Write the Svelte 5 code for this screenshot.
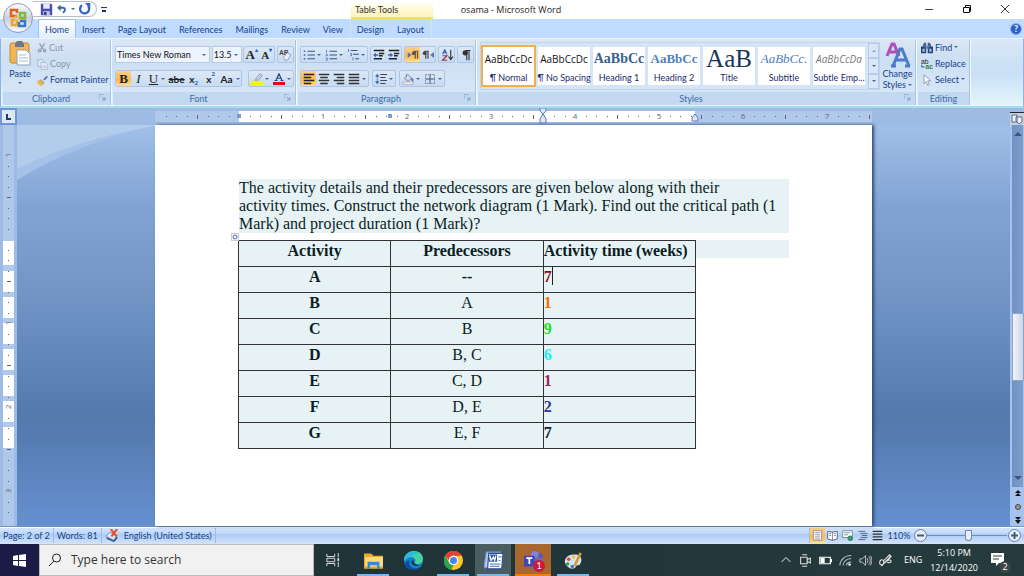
<script>
    const icons = {
        save: '<path d="M1 1h13l1 1v13H1z" fill="#4a50b0"/><path d="M4 1h8v6H4z" fill="#e8ecfa"/><path d="M4 10h8v5H4z" fill="#c5cae8"/><path d="M5 11h3v4H5z" fill="#343a90"/>',
        undo: '<path d="M4 6h5c5 0 5 6 0 8" fill="none" stroke="#3764b8" stroke-width="3"/><path d="M0 6l6-5v10z" fill="#3764b8"/>',
        redo: '<path d="M4 3a6 6 0 1 0 8 1" fill="none" stroke="#3764c4" stroke-width="3"/><path d="M8 0h7v8z" fill="#3764c4"/>',
        cut: '<path d="M4 1l6 9M12 1L6 10" stroke="#8b9bb2" stroke-width="2"/><circle cx="4" cy="12" r="2" fill="none" stroke="#8b9bb2" stroke-width="2"/><circle cx="12" cy="12" r="2" fill="none" stroke="#8b9bb2" stroke-width="2"/>',
        copy: '<path d="M1 1h7l2 3v7H1z" fill="#dce7f4" stroke="#9aabc2"/><path d="M6 5h6l3 3v7H6z" fill="#e8eff8" stroke="#9aabc2"/><path d="M8 10h5M8 12h5" stroke="#9aabc2"/>',
        painter: '<path d="M9 6l5-5 2 2-5 5z" fill="#5572a8"/><path d="M5 6l6 5-2 3-7-5z" fill="#8f9aa8"/><path d="M0 9l4-2 6 5-3 4c-3 0-6-3-7-7z" fill="#e9b64a"/>',
        clear: '<text x="0" y="8" font-size="9" font-weight="bold" fill="#444" font-family="Liberation Sans">AB</text><path d="M6 11l5-6 5 3-5 7H8z" fill="#eceff8" stroke="#7d86a8"/>',
        bullets: '<path d="M6 3h10M6 8h10M6 13h10" stroke="#3d4f77" stroke-width="1.3"/><path d="M1 2h2v2H1zM1 7h2v2H1zM1 12h2v2H1z" fill="#3d65b5"/>',
        numbers: '<path d="M6 3h10M6 8h10M6 13h10" stroke="#3d4f77" stroke-width="1.3"/><path d="M2 1v4M1 7h2v2H1M1 12h2v3H1" fill="none" stroke="#3d65b5"/>',
        levels: '<path d="M5 2h9M8 7h8M11 13h5" stroke="#3d4f77" stroke-width="1.3"/><path d="M2 0v4M4 6h2v3H4M8 11v4" fill="none" stroke="#3d65b5"/>',
        outdent: '<path d="M1 2h14M8 6h7M8 9h5M1 13h11" stroke="#222" stroke-width="2"/><path d="M0 8l4-3v2h3v2H4v2z" fill="#3d65b5"/>',
        indent: '<path d="M1 2h14M8 6h7M8 9h5M1 13h11" stroke="#222" stroke-width="2"/><path d="M7 8L3 5v2H0v2h3v2z" fill="#3d65b5"/>',
        ltr: '<path d="M1 4l5 4-5 4z" fill="#4a78c8"/><path d="M15 3H9M11 3v10M14 3v10" stroke="#555" stroke-width="1.6"/><circle cx="9" cy="5.500" r="2.500" fill="#555"/>',
        rtl: '<path d="M16 4l-5 4 5 4z" fill="#4a78c8"/><path d="M9 3H3M5 3v10M8 3v10" stroke="#444" stroke-width="1.6"/><circle cx="3.500" cy="5.500" r="2.500" fill="#444"/>',
        sort: '<path d="M2 7l3-6 3 6M3 5h4" fill="none" stroke="#3d65b5" stroke-width="1.5"/><path d="M2 9h6l-6 6h6" fill="none" stroke="#a33040" stroke-width="1.5"/><path d="M13 1v12M10 10l3 4 3-4" fill="none" stroke="#333" stroke-width="1.5"/>',
        pilcrow: '<path d="M14 2H7M9 2v13M12 2v13" stroke="#333" stroke-width="1.5"/><circle cx="7" cy="5" r="3.500" fill="#333"/>',
        left: '<path d="M1 2h14M1 6h10M1 10h14M1 14h10" stroke="#222" stroke-width="1.7"/>',
        center: '<path d="M1 2h14M3 6h10M1 10h14M3 14h10" stroke="#333" stroke-width="1.7"/>',
        right: '<path d="M1 2h14M5 6h10M1 10h14M5 14h10" stroke="#333" stroke-width="1.7"/>',
        justify: '<path d="M1 2h14M1 6h14M1 10h14M1 14h14" stroke="#333" stroke-width="1.7"/>',
        spacing: '<path d="M7 2h9M7 6h7M7 10h9M7 14h7" stroke="#445" stroke-width="1.4"/><path d="M3 3v10" stroke="#3d65b5"/><path d="M0 5l3-4 3 4zM0 11l3 4 3-4z" fill="#3d65b5"/>',
        shading: '<path d="M3 7l5-5 5 5-5 4z" fill="#d3dbe8" stroke="#66758f"/><path d="M6 5V1" stroke="#66758f"/><path d="M12 6l3 2v3h-2z" fill="#3d65b5"/><path d="M1 12h14v3H1z" fill="#fff" stroke="#99a"/>',
        borders: '<path d="M2 2h12v12H2z" fill="none" stroke="#5c6c88" stroke-dasharray="2 1"/><path d="M8 2v12M2 8h12" stroke="#46536c" stroke-width="1.3"/>',
        marker: '<path d="M6 8l6-7 3 2-5 7z" fill="#c3d5ee" stroke="#7f91ab"/><path d="M3 10l3-2 3 2-2 1z" fill="#dfb24e"/><path d="M0 12h16v4H0z" fill="#fff200"/>',
        fontcolor: '<path d="M4 10l4-9 4 9M5 7h6M2 10h4M10 10h4" fill="none" stroke="#2b4480" stroke-width="1.6"/><path d="M0 12h16v4H0z" fill="#f00018"/>',
        find: '<path d="M2 6l2-5h3v5M9 6V1h3l2 5" fill="#42618f"/><path d="M0 6h7v9H0zM9 6h7v9H9z" fill="#24457c"/><path d="M6 5h4v4H6z" fill="#6a86b8"/><path d="M2 9h3v4H2zM11 9h3v4h-3z" fill="#a9c0e4"/>',
        replace: '<text x="0" y="8" font-size="9" fill="#222" font-family="Liberation Sans">ab</text><text x="6" y="15" font-size="9" font-weight="bold" fill="#2c8642" font-family="Liberation Sans">ac</text><path d="M1 9v3h4" fill="none" stroke="#36a" stroke-width="1.5"/>',
        select: '<path d="M4 1v12l3-3 2 5 2-1-2-5h4z" fill="#fff" stroke="#7b8ba8"/>',
        proof: '<path d="M1 9l5-5 9 4-4 6z" fill="#dbe6f8" stroke="#6c80ac"/><path d="M2 11l9 4 4-5" fill="none" stroke="#35589c" stroke-width="2"/><path d="M7 0l7 9M15 0L8 9" stroke="#f04a28" stroke-width="2.500"/>',
        print: '<path d="M2 1h12v14H2z" fill="#fff" stroke="#6b7690"/><path d="M4 4h8M4 7h8M4 10h8M4 13h8" stroke="#667"/>',
        reading: '<path d="M8 3L1 2v11l7 2 7-2V2z" fill="#fff" stroke="#566480" stroke-width="1.4"/><path d="M8 3v12M3 5h3M3 8h3M10 5h3M10 8h3" stroke="#566480"/>',
        web: '<path d="M1 1h14v10H1z" fill="#fff" stroke="#566480"/><path d="M3 4h9M3 7h6" stroke="#566480"/><circle cx="12" cy="12" r="4" fill="#2f9558"/><path d="M10 10h3v3z" fill="#4c8be0"/>',
        outline: '<path d="M2 2h10M5 5h10M7 8h8M5 11h10M2 14h10" stroke="#566480" stroke-width="1.4"/>',
        taskview: '<path d="M1 1v3h9V1M1 15v-3h9v3M1 6h9v4H1zM14 0v5M14 10v6" fill="none" stroke="#eee"/><path d="M13 6h2v3h-2z" fill="#eee"/>',
        explorer: '<path d="M0 2h6l2 2h8v11H0z" fill="#e8a92c"/><path d="M1 5h15v8H1z" fill="#ffdc78"/><path d="M3 9h10v6h-2v-3H5v3H3z" fill="#2d8cd2"/>',
        edge: '<circle cx="8" cy="8" r="8" fill="#1683cf"/><path d="M0 8C0-2 16-3 16 7c0 4-5 5-7 3 3-5-5-7-9-2z" fill="#42d3a0"/><path d="M0 8c1-8 10-9 14-5C9 1 7 4 0 8z" fill="#2db9e8"/><path d="M5 8c-2 5 3 9 9 5-3 4-9 4-12 1-2-3-1-6 3-6z" fill="#0d4e9a"/><path d="M8 7c-1 3 2 5 5 5-5 2-9-2-5-5z" fill="#203137"/>',
        chrome: '<circle cx="8" cy="8" r="8" fill="#fbc926"/><path d="M1 4a8 8 0 0 1 14 0H8L5 9z" fill="#e34133"/><path d="M1 4l4 7 3 1-2 4A8 8 0 0 1 1 4z" fill="#2ba24c"/><circle cx="8" cy="8" r="4" fill="#fff"/><circle cx="8" cy="8" r="3" fill="#4285f4"/>',
        word: '<path d="M2 1h12l-2 13H0z" fill="#b9cdea" stroke="#7d99c8"/><path d="M4 2h12l-1 13H3z" fill="#fff" stroke="#2a4f9b"/><path d="M12 5h3M12 8h2M5 11h9M5 13h8" stroke="#6b8fcc"/><path d="M5 3h6v6H4z" fill="#285aa8"/><path d="M5 4l1 4 2-3 1 3 1-4" fill="none" stroke="#fff"/>',
        teams: '<circle cx="9" cy="3" r="3" fill="#7b83eb"/><circle cx="14" cy="4" r="2" fill="#5059c9"/><path d="M6 6h10v5a5 5 0 0 1-10 2z" fill="#6068cc"/><path d="M0 4h9v9H0z" fill="#4148ae"/><path d="M2 6h5M4.500 6v5" stroke="#fff" stroke-width="1.500"/>',
        paint: '<path d="M8 3c5-1 8 3 6 7-1 3-3 1-4 3s-4 3-7 0C-2 9 2 3 8 3z" fill="#d3e5ef"/><circle cx="4" cy="7" r="1.500" fill="#e74335"/><circle cx="8" cy="5" r="1.500" fill="#f7c331"/><circle cx="3" cy="11" r="1.500" fill="#3ba055"/><circle cx="7" cy="13" r="1.500" fill="#3f78ce"/><path d="M8 12l5-11 2 1-5 11z" fill="#d99638"/>',
        chevron: '<path d="M1 11l7-7 7 7" fill="none" stroke="#fff" stroke-width="1.500"/>',
        meet: '<path d="M2 4h8v8H2zM10 7l4-2v6l-4-2M4 1h6M4 15h6" fill="none" stroke="#ddd" stroke-width="1.300"/>',
        battery: '<path d="M1 4h13v8H1z" fill="none" stroke="#fff" stroke-width="1.500"/><path d="M2 5h5v6H2zM14 6h2v4h-2z" fill="#fff"/>',
        wifi: '<path d="M1 14A13 13 0 0 1 15 2M5 14a9 9 0 0 1 10-8M9 14a5 5 0 0 1 6-4" fill="none" stroke="#bbc4c5" stroke-width="1.300"/><circle cx="13" cy="13" r="1.500" fill="#fff"/>',
        volume: '<path d="M1 6h3l4-4v12l-4-4H1zM10 5q2 3 0 6M12 3q4 5 0 10M14 2q4 6 0 12" fill="none" stroke="#ddd"/>',
        pen: '<path d="M1 10c0-4 5-4 5 0s-6 5-5 0M6 8l7-7 2 2-8 8c4-5 8-4 8-2s-4 2-5 1M3 15L14 3" fill="none" stroke="#e3e6e6" stroke-width="1.300"/>'
    };

    const tabs = ["Home", "Insert", "Page Layout", "References", "Mailings", "Review", "View"];

    const styleItems = [
        { sample: "AaBbCcDc", name: "¶ Normal", kind: "body" },
        { sample: "AaBbCcDc", name: "¶ No Spacing", kind: "body" },
        { sample: "AaBbCc", name: "Heading 1", kind: "h1" },
        { sample: "AaBbCc", name: "Heading 2", kind: "h2" },
        { sample: "AaB", name: "Title", kind: "title" },
        { sample: "AaBbCc.", name: "Subtitle", kind: "subtitle" },
        { sample: "AaBbCcDa", name: "Subtle Emp...", kind: "subtle" }
    ];

    const rows = [
        { activity: "A", before: "--", weeks: 7, color: "#8f0a14" },
        { activity: "B", before: "A", weeks: 1, color: "#ff6a00" },
        { activity: "C", before: "B", weeks: 9, color: "#1fe01f" },
        { activity: "D", before: "B, C", weeks: 6, color: "#18f0f0" },
        { activity: "E", before: "C, D", weeks: 1, color: "#a02060" },
        { activity: "F", before: "D, E", weeks: 2, color: "#3030a0" },
        { activity: "G", before: "E, F", weeks: 7, color: "#102028" }
    ];

    // One inch on the rulers, in pixels, and where the text area starts
    const inch = 84;
    const origin = 84;
    const eighths = (from, to) => Array.from({ length: to - from + 1 }, (_, i) => from + i);

    const pinned = [
        { name: "File Explorer", icon: "explorer", open: true },
        { name: "Microsoft Edge", icon: "edge" },
        { name: "Google Chrome", icon: "chrome", open: true },
        { name: "Word", icon: "word", open: true, state: "active" },
        { name: "Teams", icon: "teams", open: true, state: "alert", badge: 1 },
        { name: "Paint", icon: "paint", open: true }
    ];

    const tray = ["chevron", "meet", "battery", "wifi", "volume", "pen"];
</script>

{#snippet icon(name, size = 12)}
    <svg class="icon" width={size} height={size} viewBox="0 0 16 16" aria-hidden="true">{@html icons[name]}</svg>
{/snippet}

{#snippet tool(label, name, caret = false, on = false)}
    <button class="tool" class:on class:wide={caret} aria-label={label}>
        {@render icon(name)}
        {#if caret}<i class="caret"></i>{/if}
    </button>
{/snippet}

{#snippet launcher()}
    <svg class="launcher" width="7" height="7" viewBox="0 0 7 7" aria-hidden="true">
        <path d="M0 5V0h5M3 3l3 3M6 3v3H3" fill="none" stroke="#7f9fc9" />
    </svg>
{/snippet}

<div class="app">
    <header>
        <div class="titlebar">
            <div class="quick">
                <button aria-label="Save">{@render icon("save", 13)}</button>
                <button aria-label="Undo">{@render icon("undo", 10)}</button>
                <i class="caret"></i>
                <button aria-label="Redo">{@render icon("redo", 12)}</button>
            </div>
            <button class="more" aria-label="Customize toolbar"><i class="caret"></i></button>
            <div class="context">Table Tools</div>
            <h1>osama - Microsoft Word</h1>
            <div class="window">
                <button aria-label="Minimize"><svg width="10" height="10"><path d="M1 5.500h8" stroke="#444" /></svg></button>
                <button aria-label="Restore"><svg width="10" height="10"><path d="M1.500 3.500h6v5h-6zM3.500 3V1.500h5v6H8" fill="none" stroke="#111" /></svg></button>
                <button aria-label="Close"><svg width="10" height="10"><path d="M1 1l8 8M9 1L1 9" stroke="#333" /></svg></button>
            </div>
        </div>
        <button class="office" aria-label="Office Button">
            <svg width="18" height="20" viewBox="0 0 18 20" fill="none" stroke-width="2.500">
                <path d="M8 8H2V2h6v3" stroke="#e2601c" />
                <path d="M11 5h5v5h-5z" stroke="#84b53c" />
                <path d="M8 12v5H3v-5h3" stroke="#f0a51e" />
                <path d="M11 13h5v5h-6v-4" stroke="#3c78c8" />
                <path d="M6 8h4v4H6z" stroke="#f3c34b" stroke-width="1" />
            </svg>
        </button>
        <nav class="tabs">
            {#each tabs as tab, i}
                <button class:current={i === 0}>{tab}</button>
            {/each}
            <span class="tool-tabs">
                <button>Design</button>
                <button>Layout</button>
            </span>
            <button class="help" aria-label="Help">
                <svg width="12" height="12" viewBox="0 0 12 12"><circle cx="6" cy="6" r="5.500" fill="#2b62c8" stroke="#8fb2e8" /><text x="6" y="9" text-anchor="middle" font-size="9" font-weight="bold" fill="#fff">?</text></svg>
            </button>
        </nav>

        <div class="ribbon">
            <section class="group clipboard">
                <div class="content">
                    <button class="paste">
                        <svg width="23" height="25" viewBox="0 0 23 25" aria-hidden="true">
                            <rect x="1" y="2" width="19" height="20" rx="2" fill="#eeb656" stroke="#c28a34" />
                            <path d="M6 3l2-3h5l2 3v3H6z" fill="#6e7788" />
                            <path d="M8 9h9l4 4v11H8z" fill="#fff" stroke="#8ea0bd" />
                            <path d="M10 14h7M10 17h9M10 20h9" stroke="#a9b9d2" />
                        </svg>
                        Paste
                        <i class="caret"></i>
                    </button>
                    <div class="stack">
                        <button class="dim">{@render icon("cut", 10)}Cut</button>
                        <button class="dim">{@render icon("copy", 11)}Copy</button>
                        <button>{@render icon("painter", 11)}Format Painter</button>
                    </div>
                </div>
                <footer><span>Clipboard</span>{@render launcher()}</footer>
            </section>

            <section class="group font">
                <div class="content lines">
                    <div class="line">
                        <label class="combo family">
                            <select aria-label="Font"><option>Times New Roman</option></select>
                            <i class="caret"></i>
                        </label>
                        <label class="combo size">
                            <select aria-label="Font size"><option>13.5</option></select>
                            <i class="caret"></i>
                        </label>
                        <div class="cluster">
                            <button class="tool letter grow">A<sup>▴</sup></button>
                            <button class="tool letter shrink">A<sup>▾</sup></button>
                        </div>
                        <div class="cluster">{@render tool("Clear formatting", "clear")}</div>
                    </div>
                    <div class="line">
                        <div class="cluster">
                            <button class="tool letter on"><b>B</b></button>
                            <button class="tool letter"><em>I</em></button>
                            <button class="tool letter wide"><u>U</u><i class="caret"></i></button>
                            <button class="tool letter small"><s>abe</s></button>
                            <button class="tool letter small">x<sub>2</sub></button>
                            <button class="tool letter small">x<sup>2</sup></button>
                            <button class="tool letter small wide">Aa<i class="caret"></i></button>
                        </div>
                        <div class="cluster">
                            {@render tool("Highlight", "marker", true)}
                            {@render tool("Font color", "fontcolor", true)}
                        </div>
                    </div>
                </div>
                <footer><span>Font</span>{@render launcher()}</footer>
            </section>

            <section class="group paragraph">
                <div class="content lines">
                    <div class="line">
                        <div class="cluster">
                            {@render tool("Bullets", "bullets", true)}
                            {@render tool("Numbering", "numbers", true)}
                            {@render tool("Multilevel list", "levels", true)}
                        </div>
                        <div class="cluster">
                            {@render tool("Decrease indent", "outdent")}
                            {@render tool("Increase indent", "indent")}
                        </div>
                        <div class="cluster">
                            {@render tool("Left to right", "ltr", false, true)}
                            {@render tool("Right to left", "rtl")}
                        </div>
                        <div class="cluster">{@render tool("Sort", "sort")}</div>
                        <div class="cluster">{@render tool("Show marks", "pilcrow")}</div>
                    </div>
                    <div class="line packed">
                        <div class="cluster">
                            {@render tool("Align left", "left", false, true)}
                            {@render tool("Center", "center")}
                            {@render tool("Align right", "right")}
                            {@render tool("Justify", "justify", true)}
                        </div>
                        <div class="cluster">{@render tool("Line spacing", "spacing", true)}</div>
                        <div class="cluster">
                            {@render tool("Shading", "shading", true)}
                            {@render tool("Borders", "borders", true)}
                        </div>
                    </div>
                </div>
                <footer><span>Paragraph</span>{@render launcher()}</footer>
            </section>

            <section class="group styles">
                <div class="content">
                    <div class="gallery">
                        {#each styleItems as item, i}
                            <button class="style-item" class:picked={i === 0}>
                                <span class="sample {item.kind}">{item.sample}</span>
                                <span class="name">{item.name}</span>
                            </button>
                        {/each}
                        <div class="pager">
                            <button aria-label="Previous styles"><i class="caret up"></i></button>
                            <button aria-label="Next styles"><i class="caret"></i></button>
                            <button aria-label="All styles"><i class="caret"></i></button>
                        </div>
                    </div>
                    <button class="change">
                        <svg width="26" height="26" viewBox="0 0 26 26" aria-hidden="true" fill="none">
                            <path d="M2 14L7 2h2l5 12M4 10h8" stroke="#b04fb8" stroke-width="3" />
                            <path d="M8 24l7-17h2l7 17M10 18h12M6 24h5M20 24h5" stroke="#4a7cc8" stroke-width="3" />
                        </svg>
                        <span>Change</span>
                        <span>Styles <i class="caret"></i></span>
                    </button>
                </div>
                <footer><span>Styles</span>{@render launcher()}</footer>
            </section>

            <section class="group editing">
                <div class="content">
                    <div class="stack">
                        <button>{@render icon("find")}Find <i class="caret"></i></button>
                        <button>{@render icon("replace")}Replace</button>
                        <button>{@render icon("select")}Select <i class="caret"></i></button>
                    </div>
                </div>
                <footer><span>Editing</span></footer>
            </section>
        </div>
    </header>

    <div class="ruler-row">
        <button class="corner" aria-label="Tab stop"><svg width="11" height="11"><path d="M4 3v5h4" fill="none" stroke="#223a66" stroke-width="2" /></svg></button>
        <div class="ruler">
            <svg width="717" height="17" aria-hidden="true">
                <rect x="0" y="3" width="717" height="11" fill="#b0c9eb" />
                <rect x={origin} y="3" width="456" height="11" fill="#fff" />
                {#each eighths(-7, 60) as n}
                    {@const x = origin + (n * inch) / 8}
                    {#if n % 8 === 0 && n > 0}
                        <text {x} y="11" text-anchor="middle">{n / 8}</text>
                    {:else if n % 8 !== 0}
                        <rect x={Math.round(x)} y={n % 4 === 0 ? 7 : 8} width="1" height={n % 4 === 0 ? 4 : 1} fill="#5a6578" />
                    {/if}
                {/each}
                <path d="M82 6h4v4h-4zM233 6h4v4h-4z" fill="#7b9ccd" />
                <path d="M385 0h6v3l-3 3-3-3zM388 6l3 5v4h-6v-4zM540 6l3 4v3h-6v-3z" fill="#dbe7f8" stroke="#5c7fb5" />
            </svg>
        </div>
        <button class="view-ruler" aria-label="View ruler"><svg width="12" height="12"><path d="M1 2h5v7H1zM5 4h6v5l-3 2-3-3z" fill="#eef2fa" stroke="#5c6884" /></svg></button>
    </div>

    <div class="workspace">
        <div class="side-ruler">
            <svg width="17" height="401" aria-hidden="true">
                <rect x="3" y="0" width="11" height="401" fill="#b0c9eb" />
                <rect x="3" y="116" width="11" height="24" fill="#fff" />
                {#each eighths(0, 6) as n}
                    <rect x="3" y={146 + n * 26} width="11" height="21" fill="#fff" />
                {/each}
                {#each eighths(-8, 26) as n}
                    {@const y = Math.round(114 + (n * inch) / 8)}
                    {#if n % 8 === 0 && n !== 0}
                        <text x="0" y="0" text-anchor="middle" transform="translate(11 {y}) rotate(-90)">{Math.abs(n / 8)}</text>
                    {:else if n !== 0}
                        <rect x={n % 4 === 0 ? 7 : 8} {y} width={n % 4 === 0 ? 4 : 1} height="1" fill="#5a6578" />
                    {/if}
                {/each}
            </svg>
        </div>

        <main>
            <svg class="swoosh" width="138" height="56" aria-hidden="true">
                <path d="M0 0h138v1Q60 18 0 55z" fill="#a5c1e8" />
                <path d="M0 0h138v1Q60 14 0 44z" fill="#b2cceb" />
            </svg>
            <article class="page">
                <p>
                    The activity details and their predecessors are given below along with their<br />
                    activity times. Construct the network diagram (1 Mark). Find out the critical path (1<br />
                    Mark) and project duration (1 Mark)?
                </p>
                <div class="table-line">
                    <span class="handle"><svg width="6" height="6"><circle cx="3" cy="3" r="2" fill="none" stroke="#3d65c5" /></svg></span>
                    <table>
                        <thead>
                            <tr><th>Activity</th><th>Predecessors</th><th>Activity time (weeks)</th></tr>
                        </thead>
                        <tbody>
                            {#each rows as row, i}
                                <tr>
                                    <th scope="row">{row.activity}</th>
                                    <td class:dashes={i === 0}>{row.before}</td>
                                    <td class="weeks" class:cursor={i === 0} style="color: {row.color}">{row.weeks}</td>
                                </tr>
                            {/each}
                        </tbody>
                    </table>
                    <div class="tail"></div>
                </div>
            </article>
        </main>

        <div class="scrollbar">
            <div class="track">
                <i class="arrow up"></i>
                <div class="thumb"></div>
                <i class="arrow"></i>
            </div>
            <div class="browse">
                <button aria-label="Previous page"><svg width="6" height="8"><path d="M3 0l3 3H0zM3 3l3 3H0z" fill="#111" /></svg></button>
                <button aria-label="Select browse object"><svg width="6" height="6"><circle cx="3" cy="3" r="2.500" fill="#999" stroke="#444" /></svg></button>
                <button aria-label="Next page"><svg width="6" height="8"><path d="M3 4L0 1h6zM3 8L0 4h6z" fill="#111" /></svg></button>
            </div>
        </div>
    </div>

    <div class="status">
        <span>Page: 2 of 2</span>
        <span>Words: 81</span>
        <span class="lang">{@render icon("proof", 13)}English (United States)</span>
        <div class="views">
            <button class="on" aria-label="Print layout">{@render icon("print", 11)}</button>
            <button aria-label="Full screen reading">{@render icon("reading", 11)}</button>
            <button aria-label="Web layout">{@render icon("web", 11)}</button>
            <button aria-label="Outline">{@render icon("outline", 11)}</button>
            <button aria-label="Draft">{@render icon("justify", 11)}</button>
        </div>
        <button class="percent">110%</button>
        <button class="round" aria-label="Zoom out"><svg width="13" height="13"><circle cx="6.500" cy="6.500" r="6" fill="#e6effb" stroke="#6180b0" /><path d="M3 6.500h7" stroke="#42597f" stroke-width="2" /></svg></button>
        <input type="range" aria-label="Zoom" min="10" max="190" value="103" />
        <button class="round" aria-label="Zoom in"><svg width="13" height="13"><circle cx="6.500" cy="6.500" r="6" fill="#e6effb" stroke="#6180b0" /><path d="M3 6.500h7M6.500 3v7" stroke="#42597f" stroke-width="2" /></svg></button>
    </div>

    <div class="taskbar">
        <button class="start" aria-label="Start"><svg width="13" height="13"><path d="M0 2l5-1v5H0zM6 1l7-1v6H6zM0 7h5v5l-5-1zM6 7h7v6l-7-1z" fill="#fff" /></svg></button>
        <label class="search">
            <svg width="14" height="14" aria-hidden="true"><circle cx="8.500" cy="5" r="4" fill="none" stroke="#222" /><path d="M6 8l-5 5" stroke="#222" /></svg>
            <input type="text" aria-label="Search" placeholder="Type here to search" />
        </label>
        <button class="app-button" aria-label="Task view">{@render icon("taskview", 14)}</button>
        {#each pinned as app}
            <button class="app-button {app.state}" class:open={app.open} aria-label={app.name}>
                {@render icon(app.icon, 19)}
                {#if app.badge}<span class="badge">{app.badge}</span>{/if}
            </button>
        {/each}
        <div class="tray">
            {#each tray as name}
                <button aria-label={name}>{@render icon(name, name === "chevron" ? 10 : 13)}</button>
            {/each}
            <span class="input-lang">ENG</span>
            <span class="clock"><time>5:10 PM</time><time>12/14/2020</time></span>
            <button class="notes" aria-label="Notifications">
                <svg width="14" height="14"><path d="M0 0h13v10H8l-3 3v-3H0z" fill="#fff" /><path d="M2 3h9M2 6h6" stroke="#263b40" /></svg>
                <span class="badge">2</span>
            </button>
        </div>
    </div>
</div>

<style>
    :global(body) {
        margin: 0;
    }

    .app {
        display: flex;
        flex-direction: column;
        min-height: 100vh;
        background: #fff;
        color: #15428b;
        font: 9px/12px Lato, "Open Sans", sans-serif;
    }

    .app :global(*) {
        box-sizing: border-box;
    }

    button {
        display: flex;
        align-items: center;
        justify-content: center;
        padding: 0;
        border: 0;
        background: none;
        color: inherit;
        font: inherit;
        white-space: nowrap;
    }

    svg {
        display: block;
        flex: none;
    }

    .caret {
        display: inline-block;
        flex: none;
        border: 2px solid transparent;
        border-top-color: #48699c;
        border-bottom-width: 0;
    }

    .caret.up {
        border: 2px solid transparent;
        border-top-width: 0;
        border-bottom-color: #8c9bb0;
    }

    header {
        position: relative;
    }

    /* Title bar */
    .titlebar {
        display: flex;
        height: 19px;
        padding-left: 32px;
    }

    .quick {
        display: flex;
        align-items: center;
        gap: 4px;
        width: 65px;
        height: 16px;
        margin-top: 1px;
        padding-left: 7px;
        border: 1px solid #b5bfcd;
        border-left-color: transparent;
        border-radius: 0 8px 8px 0;
    }

    .more {
        width: 14px;
    }

    .more .caret {
        width: 6px;
        height: 6px;
        border: 0;
        border-top: 1px solid #223a66;
        background: linear-gradient(#223a66, #223a66) center 2px / 4px 2px no-repeat;
    }

    .context {
        position: absolute;
        top: 3px;
        left: 351px;
        width: 82px;
        height: 16px;
        padding-left: 4px;
        border-bottom: 2px solid #f8dd60;
        background: linear-gradient(#fffdf0, #fff3b8);
        color: #333;
        line-height: 14px;
    }

    h1 {
        flex: 1;
        margin: 0 -98px 0 -111px;
        color: #222;
        font: 9px/20px "Open Sans", "Noto Sans", sans-serif;
        text-align: center;
    }

    .window {
        display: flex;
        gap: 28px;
        padding: 0 14px 2px 0;
    }

    .office {
        position: absolute;
        top: 3px;
        left: 3px;
        z-index: 1;
        width: 30px;
        height: 30px;
        border: 1px solid #8c9cb4;
        border-radius: 50%;
        background: linear-gradient(#fdfdfe, #c7d0dd 50%, #f7f9fc);
    }

    .tabs {
        display: flex;
        height: 19px;
        padding-left: 38px;
        background: #bfdbff;
    }

    .tabs button {
        padding: 3px 7px 0 6px;
    }

    .tabs .current {
        padding: 2px 6px 0;
        border: 1px solid #9fc0ea;
        border-bottom: 0;
        border-radius: 2px 2px 0 0;
        background: linear-gradient(#fff, #e3eefb);
    }

    .tool-tabs {
        display: flex;
        border-right: 1px solid #d8e4dc;
        border-left: 1px solid #d8e4dc;
    }

    .tabs .help {
        margin-left: auto;
        padding: 0 2px 0 0;
    }

    /* Ribbon */
    .ribbon {
        display: flex;
        gap: 2px;
        height: 70px;
        padding: 1px 2px;
        border: 1px solid #8fb4e4;
        border-top-color: #e9f3ff;
        border-bottom: 2px solid #a8dcea;
        background: linear-gradient(#d9e7f6, #c9dff5 50%, #e3f6fc);
    }

    .group {
        display: flex;
        flex-direction: column;
        border-right: 1px solid #a7c5e8;
        box-shadow: 1px 0 #f2f8ff;
        background: linear-gradient(#dbe6f4, #cddff3 30%, #d8e8f8);
    }

    .clipboard { width: 108px; }
    .font { width: 183px; }
    .paragraph { width: 178px; }
    .styles { width: 438px; }
    .editing { width: 52px; }

    .content {
        display: flex;
        flex: 1;
    }

    .group footer {
        display: flex;
        align-items: center;
        height: 13px;
        background: #c2d9f1;
        color: #3d6aaa;
        text-align: center;
    }

    .group footer span {
        flex: 1;
    }

    .launcher {
        margin: 0 4px 2px 0;
    }

    .paste {
        flex-direction: column;
        justify-content: flex-start;
        width: 34px;
        padding-top: 1px;
    }

    .paste svg {
        margin-bottom: 2px;
    }

    .paste .caret {
        margin-top: 2px;
    }

    .stack button {
        justify-content: flex-start;
        gap: 2px;
        height: 16px;
    }

    .dim {
        color: #8796ad;
    }

    .lines {
        flex-direction: column;
        gap: 7px;
        padding: 6px 1px 0 2px;
    }

    .line {
        display: flex;
        justify-content: space-between;
        height: 17px;
    }

    .packed {
        justify-content: flex-start;
        gap: 3px;
    }

    .combo {
        display: flex;
        align-items: center;
        padding-right: 3px;
        border: 1px solid #b4cbe8;
        background: #edf4fd;
    }

    .combo select {
        width: 100%;
        min-width: 0;
        padding: 0 0 0 1px;
        border: 0;
        appearance: none;
        background: none;
        color: #111;
        font: inherit;
    }

    .family { width: 95px; }
    .size { width: 30px; }

    .cluster {
        display: flex;
        border: 1px solid #adc6e6;
        border-radius: 2px;
        background: linear-gradient(#dce8f7, #c8dbf2);
    }

    .tool {
        gap: 2px;
        width: 15px;
    }

    .tool.wide {
        width: 22px;
    }

    .tool.on,
    .views .on {
        background: linear-gradient(#fbd28c, #ffb84c 60%, #ffe08a);
    }

    .letter {
        gap: 0;
        color: #222;
        font: 13px/14px "Liberation Serif", serif;
    }

    .letter .caret { margin-left: 3px; }
    .grow { font-weight: 700; }
    .shrink { font-size: 11px; font-weight: 700; }

    .letter.small {
        width: 17px;
        font: bold 10px/12px Lato, sans-serif;
    }

    .letter.small.wide {
        width: 22px;
    }

    .letter sup,
    .letter sub {
        color: #2f5db0;
        font-size: 6px;
        line-height: 6px;
    }

    .letter sup { align-self: flex-start; }
    .letter sub { align-self: flex-end; }

    .gallery {
        display: flex;
        align-items: center;
        gap: 3px;
        height: 48px;
        margin: 2px 0 0 2px;
        padding-left: 2px;
        border: 1px solid #c0d4ee;
        background: #d5e5f8;
    }

    .style-item {
        flex-direction: column;
        justify-content: space-between;
        width: 52px;
        height: 38px;
        background: #fff;
    }

    .style-item.picked {
        width: 55px;
        height: 42px;
        margin: 0 -1px 0 -2px;
        border: 2px solid #f0b14c;
    }

    .sample {
        color: #111;
        font: 10px/24px "Open Sans", "Noto Sans", sans-serif;
    }

    .h1 { color: #365f91; font: bold 14px/24px "Liberation Serif", serif; }
    .h2 { color: #4f81bd; font: bold 13px/24px "Liberation Serif", serif; }
    .title { color: #17365d; font: 25px/24px "Liberation Serif", serif; }
    .subtitle { color: #4f81bd; font: italic 13px/24px "Liberation Serif", serif; }
    .subtle { color: #777; font-style: italic; }

    .name {
        height: 13px;
        color: #1c2b6b;
    }

    .pager {
        align-self: stretch;
        display: flex;
        flex-direction: column;
    }

    .pager button {
        flex: 1;
        width: 11px;
        border: 1px solid #b5cbe8;
        background: #d9e7f8;
    }

    .change {
        flex: 1;
        flex-direction: column;
        justify-content: flex-start;
        padding-top: 2px;
        line-height: 11px;
    }

    .editing .stack {
        padding-left: 3px;
    }

    .change .caret,
    .stack .caret {
        margin-bottom: 2px;
    }

    /* Rulers */
    .ruler-row {
        display: flex;
        align-items: center;
        height: 17px;
        background: #9ebbe3;
    }

    .corner {
        width: 17px;
        height: 17px;
        border: 2px solid #6f94d8;
        background: #dce8f8;
    }

    .ruler {
        display: flex;
        flex: 1;
        justify-content: center;
    }

    .ruler text,
    .side-ruler text {
        fill: #5a6578;
        font: 8px "Open Sans", sans-serif;
    }

    .view-ruler {
        width: 14px;
        height: 13px;
        margin-top: 4px;
        border-top: 1px solid #223;
        background: #c7cfdd;
    }

    .workspace {
        display: flex;
        flex: 1;
    }

    .side-ruler {
        width: 17px;
        background: #9ebbe3;
    }

    main {
        position: relative;
        display: flex;
        flex: 1;
        justify-content: center;
        background: linear-gradient(#a0bfe8, #82a4d4 20%, #7295c6 42%, #5379ad 73%, #557bb0 76%, #6590cf);
    }

    .swoosh {
        position: absolute;
        top: 0;
        left: 0;
    }

    .page {
        position: relative;
        width: 717px;
        padding: 54px 83px 60px 84px;
        background: #fff;
        box-shadow: 2px 0 3px #2f4a75;
        color: #0b1d24;
        font: 16px/18px "Liberation Serif", serif;
    }

    .page p {
        margin: 0 0 7px;
        background: #e7f2f4;
        white-space: nowrap;
    }

    .table-line {
        position: relative;
        display: flex;
        align-items: flex-start;
        margin-left: -1px;
    }

    .handle {
        position: absolute;
        top: -7px;
        left: -7px;
        border: 1px solid #ccd;
    }

    table {
        width: 458px;
        border-collapse: collapse;
        table-layout: fixed;
        background: #e7f2f4;
    }

    th,
    td {
        height: 26px;
        padding: 0;
        border: 1px solid #333;
        text-align: center;
        vertical-align: top;
        line-height: 19px;
        white-space: nowrap;
    }

    .dashes { font-weight: 700; }

    thead th:last-child,
    .weeks {
        text-align: left;
    }

    .weeks { font-weight: 700; }

    .cursor::after {
        content: "";
        display: inline-block;
        width: 1px;
        height: 18px;
        background: #222;
        vertical-align: top;
    }

    .tail {
        flex: 1;
        height: 18px;
        background: #e7f2f4;
    }

    .scrollbar {
        display: flex;
        flex-direction: column;
        width: 14px;
        padding: 0 1px 0 2px;
        background: #a5c3ee;
    }

    .track {
        display: flex;
        flex: 1;
        flex-direction: column;
        align-items: center;
        padding: 7px 0;
        background: linear-gradient(90deg, #7092c4, #7d9dcb);
    }

    .thumb {
        width: 12px;
        height: 68px;
        margin: auto 0 95px;
        border: 1px solid #8fa5c5;
        background: linear-gradient(90deg, #f2f5f9, #cbd7e8);
    }

    .arrow {
        border: 4px solid transparent;
        border-top-color: #3d557f;
        border-bottom: 0;
    }

    .arrow.up {
        border: 4px solid transparent;
        border-top: 0;
        border-bottom-color: #3d557f;
    }

    .browse button {
        width: 100%;
        height: 13px;
    }

    /* Status bar */
    .status {
        display: flex;
        align-items: center;
        height: 18px;
        padding-right: 3px;
        border-top: 1px solid #6f94c4;
        box-shadow: inset 0 1px #fff;
        background: linear-gradient(#d8e7fb, #c3dafa 35%, #adcbf5 45%, #d5e4f8);
    }

    .status > span {
        padding: 0 3px;
        border-right: 1px solid #a0bce4;
        line-height: 15px;
    }

    .status .lang {
        display: flex;
        align-items: center;
        gap: 6px;
    }

    .views {
        display: flex;
        margin-left: auto;
        border-left: 1px solid #9fbce4;
    }

    .views button {
        width: 15px;
        height: 15px;
    }

    .percent {
        width: 28px;
    }

    .status input {
        width: 80px;
        height: 13px;
        margin: 0;
        appearance: none;
        background: linear-gradient(#6e8fbe, #6e8fbe) center / 100% 1px no-repeat;
    }

    .status input::-webkit-slider-thumb {
        width: 7px;
        height: 11px;
        border: 1px solid #7089b0;
        border-radius: 1px 1px 4px 4px;
        appearance: none;
        background: #e8f0fb;
    }

    .round {
        width: 14px;
    }

    /* Taskbar */
    .taskbar {
        display: flex;
        height: 32px;
        background: linear-gradient(90deg, #1c3036, #263b3d);
        color: #fff;
    }

    .start {
        width: 39px;
        background: #1a1c46;
    }

    .search {
        display: flex;
        align-items: center;
        gap: 9px;
        width: 275px;
        margin-right: 1px;
        padding-left: 8px;
        border: 1px solid #bbb;
        background: #f1f1f1;
    }

    .search input {
        flex: 1;
        min-width: 0;
        padding: 0;
        border: 0;
        background: none;
        font: 12px/16px "Open Sans", "Noto Sans", sans-serif;
    }

    .search input::placeholder {
        color: #333;
    }

    .app-button {
        position: relative;
        width: 36px;
        margin-right: 4px;
    }

    .open::after {
        content: "";
        position: absolute;
        right: 2px;
        bottom: 0;
        left: 2px;
        height: 2px;
        background: #76b9ed;
    }

    .active { background: #4a5d60; }
    .alert { background: #a8672f; }

    .alert.open::after {
        right: 0;
        left: 0;
        background: #ff7a00;
    }

    .badge {
        position: absolute;
        right: 6px;
        bottom: 4px;
        width: 12px;
        height: 12px;
        border-radius: 50%;
        background: #d01838;
        text-align: center;
    }

    .tray {
        display: flex;
        align-items: center;
        margin-left: auto;
        font: 9px/12px "Open Sans", "Noto Sans", sans-serif;
    }

    .tray button {
        width: 20px;
    }

    .input-lang {
        padding: 0 8px;
    }

    .clock {
        display: flex;
        flex-direction: column;
        line-height: 15px;
        text-align: center;
    }

    .tray .notes {
        position: relative;
        width: 26px;
        height: 26px;
        margin: 0 13px 0 7px;
    }

    .notes .badge {
        right: 0;
        bottom: 0;
        background: #3b4547;
    }
</style>
